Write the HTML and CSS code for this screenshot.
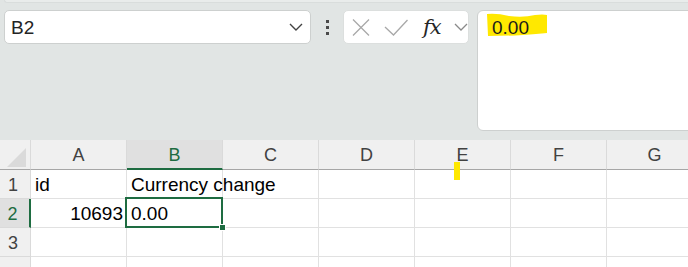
FILE: index.html
```html
<!DOCTYPE html>
<html lang="en">
<head>
    <meta charset="UTF-8">
    <title>Sheet - B2</title>
    <link rel="stylesheet" href="styles.css">
</head>
<body>
    <div class="ribbon-edge"></div>

    <div class="formula-row">
        <div class="name-box">
            <span class="name-text">B2</span>
            <svg class="name-chevron" width="14" height="8" viewBox="0 0 14 8">
                <path d="M1 1 L7 7 L13 1" fill="none" stroke="#424242" stroke-width="1.4"/>
            </svg>
        </div>

        <div class="more-dots">
            <span class="dot"></span>
            <span class="dot"></span>
            <span class="dot"></span>
        </div>

        <div class="fx-box">
            <svg class="icon-cancel" width="18" height="17" viewBox="0 0 18 17">
                <path d="M1 0.5 L17 16.5 M17 0.5 L1 16.5" stroke="#a8a8a8" stroke-width="1.3" fill="none"/>
            </svg>
            <svg class="icon-enter" width="24" height="17" viewBox="0 0 24 17">
                <path d="M1 8 L9.5 16 L23.5 1" stroke="#a8a8a8" stroke-width="1.3" fill="none"/>
            </svg>
            <span class="fx-label">fx</span>
            <svg class="fx-chevron" width="14" height="8" viewBox="0 0 14 8">
                <path d="M1 1 L7 7 L13 1" fill="none" stroke="#8a8a8a" stroke-width="1.3"/>
            </svg>
        </div>

        <div class="formula-bar">
            <svg class="marker" width="64" height="26" viewBox="0 0 64 26">
                <path d="M0 2 Q10 1 22 4 Q36 6 48 3 Q56 2 60 3 L60 21 Q50 22 36 23 Q18 24 1 24 Z" fill="#ffe800"/>
            </svg>
            <span class="formula-text">0.00</span>
        </div>
    </div>

    <div class="sheet">
        <div class="cell corner"><span class="corner-mark"></span></div>
        <div class="cell col-head">A</div>
        <div class="cell col-head active">B</div>
        <div class="cell col-head">C</div>
        <div class="cell col-head">D</div>
        <div class="cell col-head">E</div>
        <div class="cell col-head">F</div>
        <div class="cell col-head">G</div>

        <div class="cell row-head">1</div>
        <div class="cell">id</div>
        <div class="cell overflow">Currency change</div>
        <div class="cell"></div>
        <div class="cell"></div>
        <div class="cell"></div>
        <div class="cell"></div>
        <div class="cell"></div>

        <div class="cell row-head active">2</div>
        <div class="cell number">10693</div>
        <div class="cell">0.00</div>
        <div class="cell"></div>
        <div class="cell"></div>
        <div class="cell"></div>
        <div class="cell"></div>
        <div class="cell"></div>

        <div class="cell row-head">3</div>
        <div class="cell"></div>
        <div class="cell"></div>
        <div class="cell"></div>
        <div class="cell"></div>
        <div class="cell"></div>
        <div class="cell"></div>
        <div class="cell"></div>

        <div class="cell row-head"></div>
        <div class="cell"></div>
        <div class="cell"></div>
        <div class="cell"></div>
        <div class="cell"></div>
        <div class="cell"></div>
        <div class="cell"></div>
        <div class="cell"></div>

        <div class="selection"><span class="fill-handle"></span></div>
        <div class="pen-mark"></div>
    </div>
</body>
</html>
```

FILE: styles.css
```css
* {
    margin: 0;
    padding: 0;
    box-sizing: border-box;
}

body {
    width: 688px;
    height: 267px;
    overflow: hidden;
    background: #e1e5e4;
    font-family: 'Liberation Sans', Arial, sans-serif;
    color: #000000;
}

.ribbon-edge {
    height: 3px;
    margin-left: 4px;
    background: #e9eceb;
    border-bottom: 1px solid #d9dddc;
    border-left: 1px solid #d9dddc;
    border-bottom-left-radius: 4px;
}

.formula-row {
    display: flex;
    align-items: flex-start;
    margin-top: 7px;
    padding-left: 4px;
}

.name-box {
    width: 307px;
    height: 34px;
    background: #ffffff;
    border: 1px solid #cdd0cf;
    border-radius: 5px;
    display: flex;
    align-items: center;
    justify-content: space-between;
    padding: 0 7px 0 6px;
}

.name-text {
    font-size: 19px;
    color: #242424;
    padding-top: 1px;
}

.more-dots {
    width: 32px;
    height: 34px;
    display: flex;
    flex-direction: column;
    align-items: center;
    justify-content: center;
    gap: 3px;
}

.dot {
    width: 3px;
    height: 3px;
    background: #4a4a4a;
}

.fx-box {
    width: 126px;
    height: 34px;
    margin-right: 8px;
    background: #ffffff;
    border: 1px solid #dcdfde;
    border-radius: 5px;
    display: flex;
    align-items: center;
    padding-left: 8px;
}

.icon-cancel {
    margin-right: 14px;
}

.icon-enter {
    margin-right: 15px;
}

.fx-label {
    font-family: 'DejaVu Serif', 'Liberation Serif', serif;
    font-style: italic;
    font-size: 21px;
    color: #262626;
    width: 22px;
    margin-right: 9px;
    letter-spacing: -1px;
}

.formula-bar {
    position: relative;
    flex: 1;
    height: 121px;
    margin-right: -12px;
    background: #ffffff;
    border: 1px solid #cdd0cf;
    border-radius: 6px;
    padding: 6px 0 0 14px;
}

.marker {
    position: absolute;
    left: 9px;
    top: 1px;
}

.formula-text {
    position: relative;
    font-size: 19px;
    color: #1a1a1a;
}

.sheet {
    position: relative;
    margin-top: 9px;
    display: grid;
    grid-template-columns: 31px repeat(7, 96px);
    grid-template-rows: 30px repeat(4, 29px);
    background: #ffffff;
}

.cell {
    border-right: 1px solid #e1e1e1;
    border-bottom: 1px solid #e1e1e1;
    font-size: 19px;
    white-space: nowrap;
    display: flex;
    align-items: flex-end;
    padding: 0 4px 2px 4px;
}

.cell.overflow {
    overflow: visible;
    position: relative;
    z-index: 1;
}

.cell.number {
    justify-content: flex-end;
    padding-right: 3px;
}

.corner,
.col-head,
.row-head {
    background: #f0f0f0;
    color: #424242;
    border-right-color: #dadada;
}

.corner {
    position: relative;
    border-bottom: 1px solid #a6a6a6;
}

.corner-mark {
    position: absolute;
    left: 7px;
    top: 8px;
    width: 0;
    height: 0;
    border-left: 19px solid transparent;
    border-bottom: 19px solid #dadada;
}

.col-head {
    justify-content: center;
    font-size: 18px;
    padding-bottom: 3px;
    border-bottom: 1px solid #a6a6a6;
}

.col-head.active {
    background: #e0e0e0;
    color: #1e6c41;
    border-bottom: 2px solid #1e6c41;
    padding-bottom: 2px;
}

.row-head {
    justify-content: center;
    padding: 0 4px 2px 0;
    font-size: 18px;
    border-bottom-color: #dadada;
}

.row-head.active {
    background: #e0e0e0;
    color: #1e6c41;
    border-right: 2px solid #1e6c41;
}

.selection {
    position: absolute;
    left: 125px;
    top: 57px;
    width: 98px;
    height: 31px;
    border: 2px solid #1e6c41;
    z-index: 2;
}

.fill-handle {
    position: absolute;
    right: -5px;
    bottom: -5px;
    width: 7px;
    height: 7px;
    background: #1e6c41;
    border: 1px solid #ffffff;
}

.pen-mark {
    position: absolute;
    left: 454px;
    top: 22px;
    width: 6px;
    height: 18px;
    background: #ffe800;
    z-index: 2;
}
```
